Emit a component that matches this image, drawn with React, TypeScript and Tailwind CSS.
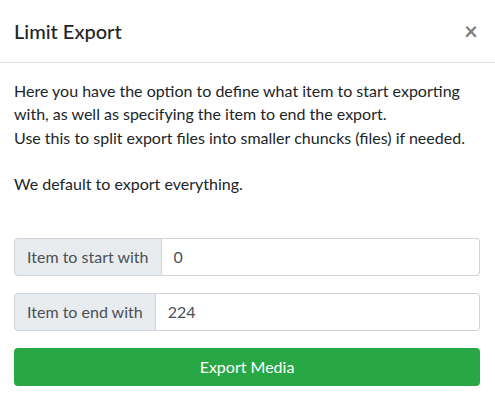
import React from 'react';

export default function App() {
  return (
    <div
      className="w-[495px] h-[398px] overflow-hidden bg-white text-[#212529]"
      style={{ fontFamily: 'Lato, "Noto Sans", sans-serif' }}
    >
      <div className="flex items-center justify-between h-[63px] pl-[14px] pr-[17px] border-b border-[#dee2e6]">
        <h5 className="text-[20px] font-medium leading-[30px]">Limit Export</h5>
        <button className="text-[24px] font-bold leading-none text-black opacity-50">×</button>
      </div>
      <div className="pt-[16px] pl-[14px] pr-[15px]">
        <p className="text-[16px] leading-[23.3px]">
          Here you have the option to define what item to start exporting with, as well as specifying the item to end the export.
          <br />
          Use this to split export files into smaller chuncks (files) if needed.
          <br />
          <br />
          We default to export everything.
        </p>
        <div className="mt-[43px] flex flex-col gap-[16.6px]">
          <div className="flex h-[38px]">
            <span className="flex items-center px-[12px] bg-[#e9ecef] border border-[#ced4da] rounded-l-[4px] text-[#495057] text-[16px]">
              Item to start with
            </span>
            <input
              className="flex-1 min-w-0 px-[12px] border border-l-0 border-[#ced4da] rounded-r-[4px] text-[#495057] text-[16px] outline-none"
              defaultValue="0"
            />
          </div>
          <div className="flex h-[38px]">
            <span className="flex items-center px-[12px] bg-[#e9ecef] border border-[#ced4da] rounded-l-[4px] text-[#495057] text-[16px]">
              Item to end with
            </span>
            <input
              className="flex-1 min-w-0 px-[12px] border border-l-0 border-[#ced4da] rounded-r-[4px] text-[#495057] text-[16px] outline-none"
              defaultValue="224"
            />
          </div>
          <button className="h-[38px] w-full rounded-[4px] bg-[#28a745] text-white text-[16px]">
            Export Media
          </button>
        </div>
      </div>
    </div>
  );
}
